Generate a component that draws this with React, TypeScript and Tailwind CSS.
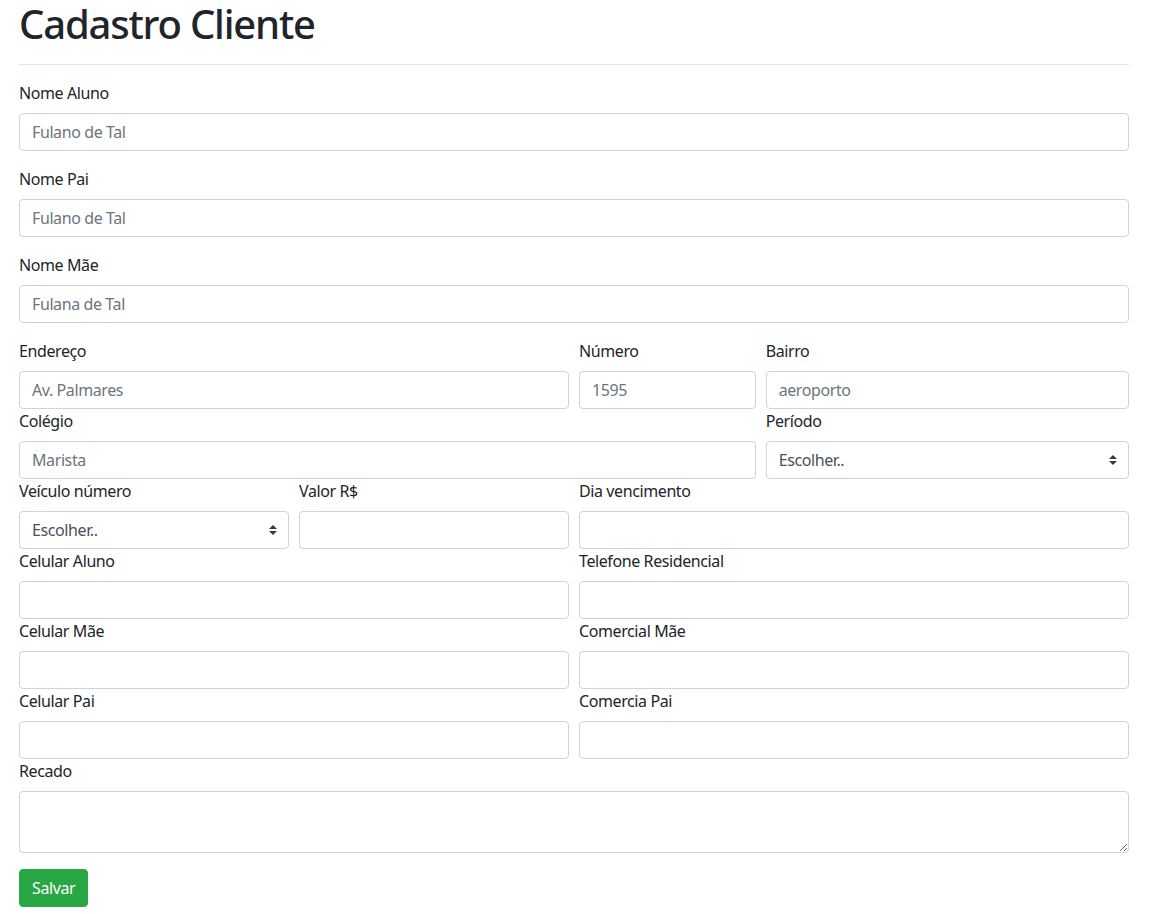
import type { ReactNode } from "react";

const inputCls =
  "block w-full h-[38px] px-3 py-[6px] text-base leading-6 text-[#495057] bg-white border border-[#ced4da] rounded placeholder:text-[#6c757d] outline-none";

function Field({
  label,
  span,
  children,
}: {
  label: string;
  span: string;
  children: ReactNode;
}) {
  return (
    <div className={span}>
      <label className="inline-block mb-2 leading-6">{label}</label>
      {children}
    </div>
  );
}

function Select() {
  return (
    <div className="relative">
      <select className={`${inputCls} appearance-none pr-7`} defaultValue="">
        <option value="">Escolher..</option>
      </select>
      <svg
        className="absolute right-3 top-1/2 -translate-y-1/2 pointer-events-none"
        width="8"
        height="10"
        viewBox="0 0 4 5"
      >
        <path fill="#343a40" d="M2 0L0 2h4zm0 5L0 3h4z" />
      </svg>
    </div>
  );
}

export default function App() {
  return (
    <div className="min-h-screen bg-white text-[#212529] font-['Noto_Sans',sans-serif] text-base tracking-[-0.025em]">
      <div className="px-[19px]">
        <div className="w-[1110px]">
          <h1 className="text-[40px] leading-[1.2] font-medium tracking-[-0.03em] mb-2">Cadastro Cliente</h1>
          <hr className="mt-4 mb-4 border-0 border-t border-black/10" />

          <form onSubmit={(e) => e.preventDefault()}>
            <div className="mb-4">
              <label className="inline-block mb-2 leading-6">Nome Aluno</label>
              <input className={inputCls} placeholder="Fulano de Tal" />
            </div>
            <div className="mb-4">
              <label className="inline-block mb-2 leading-6">Nome Pai</label>
              <input className={inputCls} placeholder="Fulano de Tal" />
            </div>
            <div className="mb-4">
              <label className="inline-block mb-2 leading-6">Nome Mãe</label>
              <input className={inputCls} placeholder="Fulana de Tal" />
            </div>

            <div className="grid grid-cols-12 gap-x-[10px]">
              <Field label="Endereço" span="col-span-6">
                <input className={inputCls} placeholder="Av. Palmares" />
              </Field>
              <Field label="Número" span="col-span-2">
                <input className={inputCls} placeholder="1595" />
              </Field>
              <Field label="Bairro" span="col-span-4">
                <input className={inputCls} placeholder="aeroporto" />
              </Field>

              <Field label="Colégio" span="col-span-8">
                <input className={inputCls} placeholder="Marista" />
              </Field>
              <Field label="Período" span="col-span-4">
                <Select />
              </Field>

              <Field label="Veículo número" span="col-span-3">
                <Select />
              </Field>
              <Field label="Valor R$" span="col-span-3">
                <input className={inputCls} />
              </Field>
              <Field label="Dia vencimento" span="col-span-6">
                <input className={inputCls} />
              </Field>

              <Field label="Celular Aluno" span="col-span-6">
                <input className={inputCls} />
              </Field>
              <Field label="Telefone Residencial" span="col-span-6">
                <input className={inputCls} />
              </Field>

              <Field label="Celular Mãe" span="col-span-6">
                <input className={inputCls} />
              </Field>
              <Field label="Comercial Mãe" span="col-span-6">
                <input className={inputCls} />
              </Field>

              <Field label="Celular Pai" span="col-span-6">
                <input className={inputCls} />
              </Field>
              <Field label="Comercia Pai" span="col-span-6">
                <input className={inputCls} />
              </Field>
            </div>

            <div className="mb-4">
              <label className="inline-block mb-2 leading-6">Recado</label>
              <textarea
                rows={2}
                className="block w-full h-[62px] px-3 py-[6px] text-base leading-6 text-[#495057] bg-white border border-[#ced4da] rounded outline-none"
              />
            </div>

            <button
              type="submit"
              className="h-[38px] px-3 py-[6px] text-base leading-6 text-white bg-[#28a745] border border-[#28a745] rounded"
            >
              Salvar
            </button>
          </form>
        </div>
      </div>
    </div>
  );
}
